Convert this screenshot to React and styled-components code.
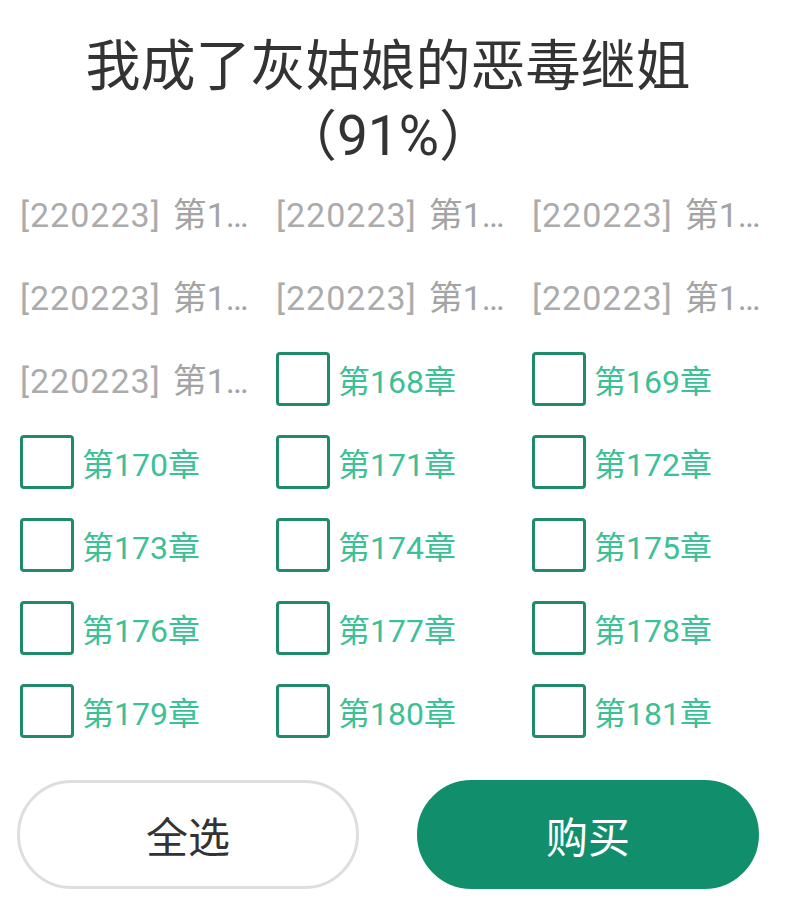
import React, { useState } from 'react'
import styled, { createGlobalStyle } from 'styled-components'

const GlobalStyle = createGlobalStyle`
  body {
    margin: 0;
    background: #fff;
    font-family: Roboto, "Noto Sans CJK SC", sans-serif;
  }
`

const Sheet = styled.div`
  width: 791px;
  height: 921px;
  background: #fff;
  overflow: hidden;
`

const Title = styled.h1`
  margin: 0;
  padding: 31px 15px 0 0;
  height: 140px;
  text-align: center;
  font-weight: 400;
  font-size: 55px;
  line-height: 70px;
  color: #333;
`

const Grid = styled.ul`
  list-style: none;
  margin: 0;
  padding: 0 0 0 20px;
  display: grid;
  grid-template-columns: repeat(3, 256px);
  grid-auto-rows: 83px;
`

const Cell = styled.li`
  display: flex;
  align-items: center;
  min-width: 0;
  padding-right: ${p => (p.done ? '26px' : '8px')};
`

const Bought = styled.span`
  font-size: 34px;
  color: #a4a4a4;
  white-space: nowrap;
  overflow: hidden;
  text-overflow: ellipsis;
`

const Stamp = styled.span`
  margin-right: 12px;
  letter-spacing: 1px;
  color: #ababab;
`

const Box = styled.span`
  flex: none;
  width: 54px;
  height: 54px;
  box-sizing: border-box;
  border: 3px solid #208b6b;
  border-radius: 4px;
  background: ${p => (p.checked ? '#208b6b' : '#fff')};
`

const Label = styled.span`
  margin-left: 8px;
  font-size: 32px;
  color: #3cc096;
  white-space: nowrap;
`

const Actions = styled.div`
  display: flex;
  gap: 58px;
  padding: 28px 32px 0 17px;
`

const Button = styled.button`
  flex: 1;
  height: 109px;
  border-radius: 55px;
  font-family: inherit;
  font-size: 42px;
  border: 3px solid ${p => (p.primary ? '#118f6c' : '#dedede')};
  background: ${p => (p.primary ? '#118f6c' : '#fff')};
  color: ${p => (p.primary ? '#fff' : '#333')};
`

const bought = [161, 162, 163, 164, 165, 166, 167]
const open = Array.from({ length: 14 }, (_, i) => 168 + i)

export default function App() {
  const [picked, setPicked] = useState([])
  const toggle = n =>
    setPicked(p => (p.includes(n) ? p.filter(x => x !== n) : [...p, n]))

  return (
    <Sheet>
      <GlobalStyle />
      <Title>
        我成了灰姑娘的恶毒继姐
        <br />
        （91%）
      </Title>
      <Grid>
        {bought.map(n => (
          <Cell key={n} done>
            <Bought>
              <Stamp>[220223]</Stamp>第{n}章 已购买
            </Bought>
          </Cell>
        ))}
        {open.map(n => (
          <Cell key={n} onClick={() => toggle(n)}>
            <Box checked={picked.includes(n)} />
            <Label>第{n}章</Label>
          </Cell>
        ))}
      </Grid>
      <Actions>
        <Button onClick={() => setPicked(open)}>全选</Button>
        <Button primary>购买</Button>
      </Actions>
    </Sheet>
  )
}
